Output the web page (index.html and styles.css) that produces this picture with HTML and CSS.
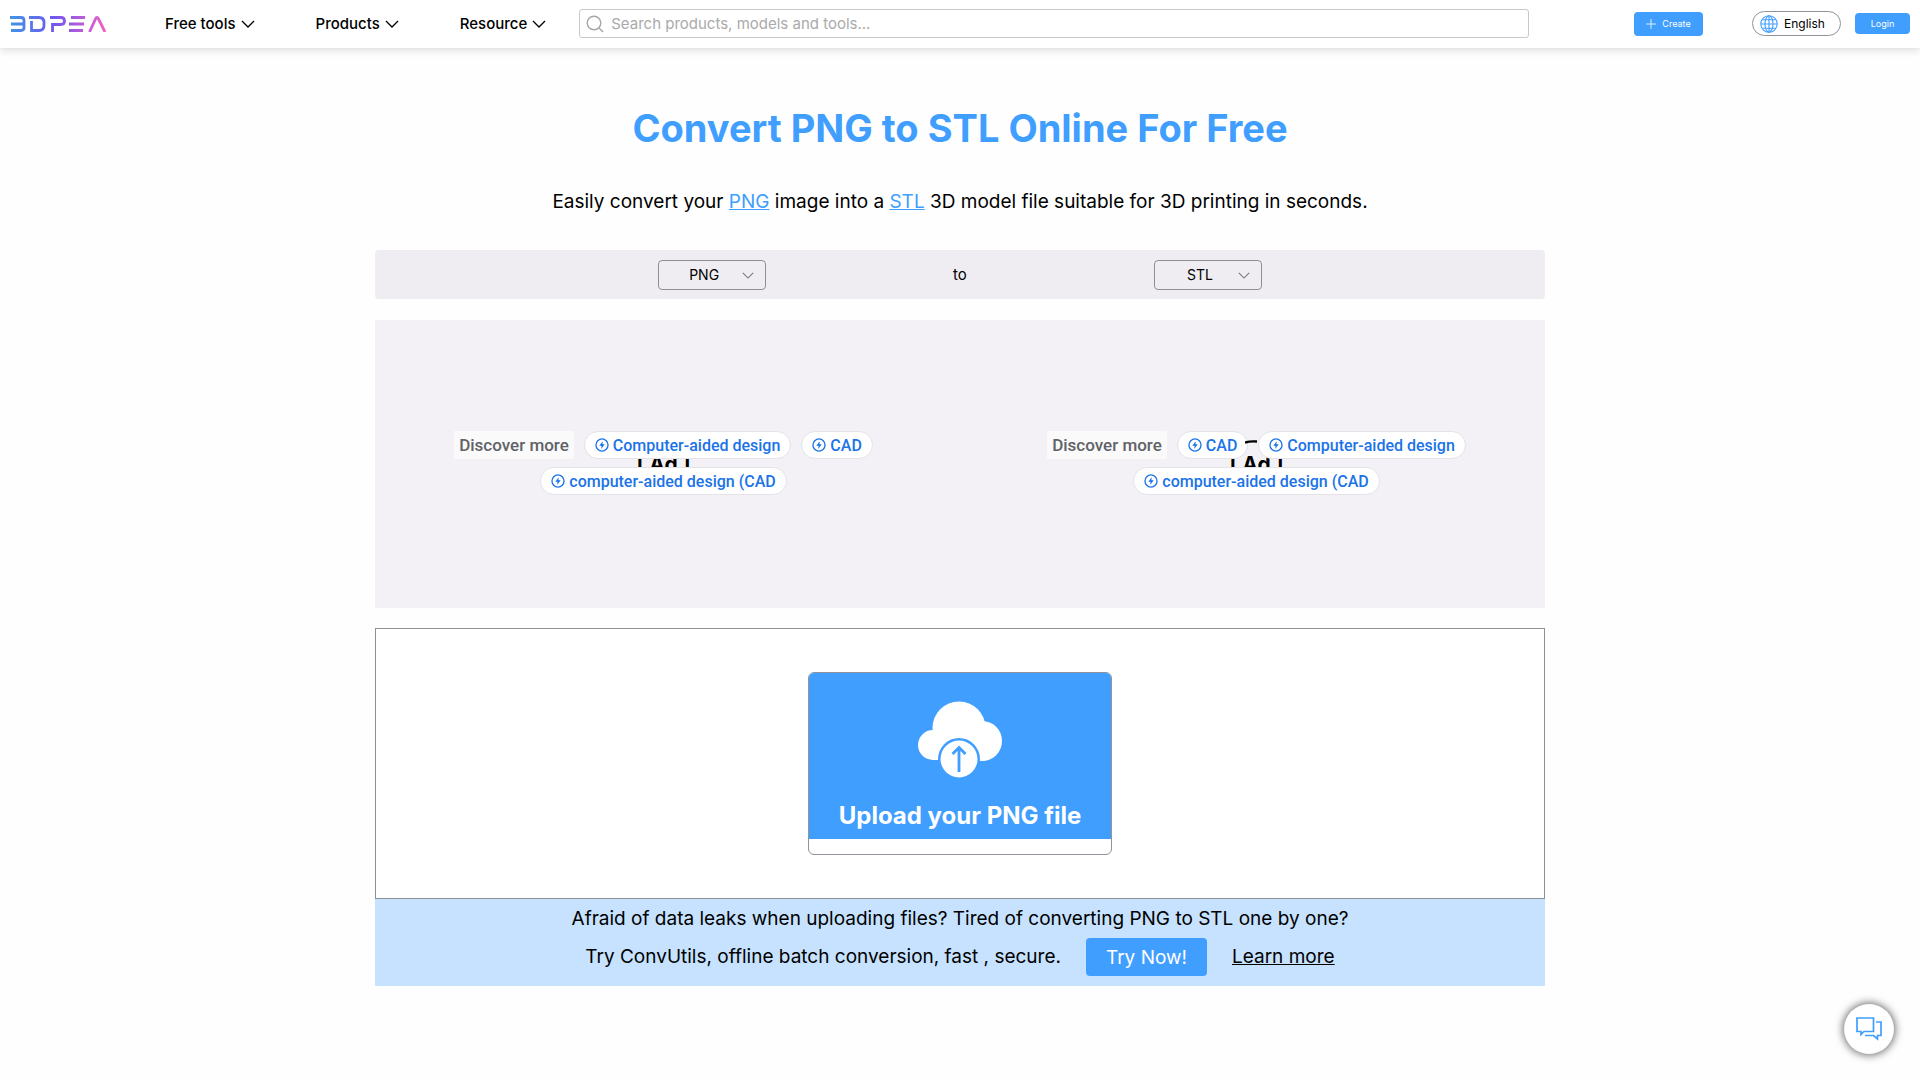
FILE: index.html
```
<!DOCTYPE html>
<html lang="en">
<head>
<meta charset="utf-8">
<title>Convert PNG to STL Online For Free</title>
<meta name="viewport" content="width=device-width, initial-scale=1">
<link rel="stylesheet" href="styles.css">
</head>
<body>
<svg width="0" height="0" class="defs">
	<symbol id="down" viewBox="0 0 14 8"><path d="M1 1l6 6 6-6" fill="none" stroke="currentColor" stroke-width="1.3"/></symbol>
	<symbol id="bolt" viewBox="0 0 16 16"><circle cx="8" cy="8" r="6.9" fill="none" stroke="currentColor" stroke-width="1.5"/><path d="M8.8 3.6L4.9 8.9h2.6l-.4 3.6 4-5.3H8.5z" fill="currentColor"/></symbol>
</svg>

<header class="header">
	<a class="logo" href="#" aria-label="3DPEA">
		<svg width="97" height="16" viewBox="0 0 97 16" fill="none" stroke="url(#lg)" stroke-width="2.8">
			<linearGradient id="lg" gradientUnits="userSpaceOnUse" x1="0" y1="0" x2="97" y2="0">
				<stop offset="0" stop-color="#3f95e8"/><stop offset=".45" stop-color="#7057ee"/><stop offset="1" stop-color="#f35fc8"/>
			</linearGradient>
			<path d="M0 1.5h11q3 0 3 3v7q0 3-3 3H1M1 8h13"/>
			<path d="M19 1.5h10q5 0 5 5v3q0 5-5 5H21.500V5"/>
			<path d="M40 1.500h11q3.500 0 3.500 3.500T51 8.500h-8.500v7.500"/>
			<path d="M61 1.500h14M59 8h15M59 14.500h14"/>
			<path d="M79.500 16l6-13q1.500-3 3 0l6.500 13"/>
		</svg>
	</a>
	<nav class="nav">
		<a href="#">Free tools <svg class="down"><use href="#down"/></svg></a>
		<a href="#">Products <svg class="down"><use href="#down"/></svg></a>
		<a href="#">Resource <svg class="down"><use href="#down"/></svg></a>
	</nav>
	<label class="search">
		<svg width="18" height="18" viewBox="0 0 18 18" fill="none" stroke="#a5a5aa" stroke-width="1.4"><circle cx="8" cy="8" r="6.800"/><path d="M13 13l4 4"/></svg>
		<input type="text" placeholder="Search products, models and tools..." aria-label="Search">
	</label>
	<div class="tools">
		<button class="create"><svg width="10" height="10" viewBox="0 0 10 10" stroke="#fff" stroke-width=".8"><path d="M5 0v10M0 5h10"/></svg>Create</button>
		<button class="lang">
			<svg width="18" height="18" viewBox="0 0 18 18" fill="none" stroke="#409eff" stroke-width="1.100"><circle cx="9" cy="9" r="8.200"/><ellipse cx="9" cy="9" rx="4" ry="8.200"/><path d="M9 1v16M1 9h16M2.500 4.800h13M2.500 13.200h13"/></svg>English
		</button>
		<button class="login">Login</button>
	</div>
</header>

<main class="main">
	<h1 class="title">Convert PNG to STL Online For Free</h1>
	<p class="intro">Easily convert your <a href="#">PNG</a> image into a <a href="#">STL</a> 3D model file suitable for 3D printing in seconds.</p>

	<div class="formats">
		<div class="select">
			<select aria-label="From format"><option>PNG</option></select>
			<svg><use href="#down"/></svg>
		</div>
		<span>to</span>
		<div class="select">
			<select aria-label="To format"><option>STL</option></select>
			<svg><use href="#down"/></svg>
		</div>
	</div>

	<div class="ads">
		<div class="ad">
			<span class="adtext">[ Ad ]</span>
			<div class="chips">
				<span class="discover">Discover more</span>
				<a class="chip" href="#"><svg><use href="#bolt"/></svg>Computer-aided design</a>
				<a class="chip" href="#"><svg><use href="#bolt"/></svg>CAD</a>
			</div>
			<div class="chips">
				<a class="chip" href="#"><svg><use href="#bolt"/></svg>computer-aided design (CAD</a>
			</div>
		</div>
		<div class="ad">
			<span class="adtext">[ Ad ]</span>
			<div class="chips">
				<span class="discover">Discover more</span>
				<a class="chip" href="#"><svg><use href="#bolt"/></svg>CAD</a>
				<a class="chip" href="#"><svg><use href="#bolt"/></svg>Computer-aided design</a>
			</div>
			<div class="chips">
				<a class="chip" href="#"><svg><use href="#bolt"/></svg>computer-aided design (CAD</a>
			</div>
			<svg class="dash" width="12" height="4" viewBox="0 0 12 4"><path d="M0 2.500Q5 1 12 1.500" fill="none" stroke="#000" stroke-width="2.500"/></svg>
		</div>
	</div>

	<div class="upload">
		<div class="card">
			<button class="uploadbtn">
				<svg width="84" height="78" viewBox="0 0 84 78">
					<g fill="#fff"><circle cx="41" cy="27" r="26.500"/><circle cx="15" cy="44" r="15"/><circle cx="64" cy="40" r="20"/><path d="M15 30h50v29H15z"/></g>
					<circle cx="41" cy="58" r="21" fill="#409eff"/>
					<circle cx="41" cy="58" r="18.500" fill="#fff"/>
					<path d="M41 71V47M34.500 53l6.500-6.500 6.500 6.500" fill="none" stroke="#409eff" stroke-width="2.800"/>
				</svg>
				Upload your PNG file
			</button>
		</div>
	</div>

	<div class="banner">
		<p>Afraid of data leaks when uploading files? Tired of converting PNG to STL one by one?</p>
		<div class="try">
			<span>Try ConvUtils, offline batch conversion, fast , secure.</span>
			<button class="trybtn">Try Now!</button>
			<a href="#">Learn more</a>
		</div>
	</div>
</main>

<button class="chat" aria-label="Chat">
	<svg width="26" height="24" viewBox="0 0 26 24" fill="none" stroke="#409eff" stroke-width="1.700"><path d="M1 1h16.500v13.500H8l-3 3v-3H1z"/><path d="M20 5h5v13.500h-3.500V22l-4-3.500H9"/></svg>
</button>
</body>
</html>
```

FILE: styles.css
```
* {
	box-sizing: border-box;
}
body {
	margin: 0;
	min-height: 100vh;
	background-color: #fefefe;
	color: #000;
	font-family: Inter, "Liberation Sans", sans-serif;
}
button {
	font-family: inherit;
	border: none;
	padding: 0;
	cursor: pointer;
}
.defs {
	position: absolute;
}
.header {
	display: flex;
	align-items: center;
	height: 48px;
	padding: 0 10px 1px;
	background-color: #fff;
	box-shadow: 0 2px 8px rgba(0, 0, 0, 0.15);
}
.logo {
	display: flex;
	margin-right: 58px;
}
.nav {
	display: flex;
	gap: 61px;
	margin-right: 33px;
	font-size: 15px;
	font-weight: 500;
}
.nav a {
	display: flex;
	align-items: center;
	gap: 5px;
	color: #000;
	text-decoration: none;
}
.down {
	width: 14px;
	height: 8px;
}
.search {
	flex: 1;
	display: flex;
	align-items: center;
	gap: 7px;
	height: 29px;
	padding-left: 6px;
	border: 1px solid #c8c8cc;
	border-radius: 3px;
}
.search input {
	flex: 1;
	border: none;
	outline: none;
	padding: 0;
	background: none;
	font-family: inherit;
	font-size: 15px;
}
.search input::placeholder {
	color: #aaa;
}
.tools {
	display: flex;
	align-items: center;
	margin-left: 105px;
}
.create {
	display: flex;
	align-items: center;
	justify-content: center;
	gap: 6px;
	width: 69px;
	height: 24px;
	margin-right: 49px;
	border-radius: 4px;
	background-color: #409eff;
	color: #fff;
	font-size: 9px;
}
.lang {
	display: flex;
	align-items: center;
	gap: 6px;
	width: 89px;
	height: 25px;
	margin-right: 14px;
	padding-left: 7px;
	border: 1px solid #909399;
	border-radius: 13px;
	background-color: #fff;
	color: #000;
	font-size: 12px;
}
.login {
	width: 55px;
	height: 21px;
	border-radius: 4px;
	background-color: #409eff;
	color: #fff;
	font-size: 9px;
}

.main {
	max-width: 1170px;
	margin: 0 auto;
}
.title {
	margin: 0;
	padding-top: 56px;
	font-size: 38px;
	line-height: 48px;
	color: #409eff;
	text-align: center;
}
.intro {
	margin: 38px 0 36px;
	font-size: 19px;
	line-height: 24px;
	text-align: center;
}
.intro a {
	color: #409eff;
}
.formats {
	display: flex;
	align-items: center;
	justify-content: center;
	gap: 187px;
	height: 49px;
	border-radius: 4px;
	background-color: #efedf1;
	font-size: 15px;
}
.select {
	position: relative;
}
.select select {
	display: block;
	width: 108px;
	height: 30px;
	padding: 0 16px 0 0;
	border: 1px solid #909094;
	border-radius: 4px;
	appearance: none;
	background: none;
	color: #000;
	font-family: inherit;
	font-size: 14px;
	text-align: center;
	text-align-last: center;
}
.select svg {
	position: absolute;
	right: 12px;
	top: 12px;
	width: 12px;
	height: 7px;
	color: #777;
	pointer-events: none;
}

.ads {
	display: flex;
	gap: 16px;
	height: 288px;
	margin: 21px 0 20px;
	background-color: #f3f1f6;
}
.ad {
	position: relative;
	flex: 1;
	display: flex;
	flex-direction: column;
	justify-content: center;
	align-items: center;
	gap: 8px;
	padding-bottom: 2px;
	font-family: Roboto, sans-serif;
}
.adtext {
	position: absolute;
	top: 50%;
	left: 50%;
	transform: translate(-50%, -50%);
	font-family: Inter, sans-serif;
	font-size: 21px;
	font-weight: 700;
}
.dash {
	position: absolute;
	top: 120px;
	left: 48%;
}
.chips {
	position: relative;
	display: flex;
	gap: 10px;
}
.discover {
	padding: 0 5px;
	background-color: #fafafa;
	color: #5f6368;
	font-size: 17px;
	font-weight: 500;
	line-height: 28px;
}
.chip {
	display: flex;
	align-items: center;
	gap: 4px;
	height: 28px;
	padding: 0 10px;
	border: 1px solid #e3e3e8;
	border-radius: 14px;
	background-color: #fff;
	color: #1a73e8;
	font-size: 16px;
	font-weight: 500;
	text-decoration: none;
}
.chip svg {
	width: 14px;
	height: 14px;
}

.upload {
	display: flex;
	justify-content: center;
	padding: 43px 0;
	border: 1px solid #909090;
	background-color: #fff;
}
.card {
	width: 304px;
	padding-bottom: 15px;
	border: 1px solid #909399;
	border-radius: 6px;
	overflow: hidden;
}
.uploadbtn {
	display: flex;
	flex-direction: column;
	align-items: center;
	gap: 22px;
	width: 100%;
	height: 166px;
	padding-top: 28px;
	background-color: #409eff;
	color: #fff;
	font-size: 24px;
	font-weight: 700;
	line-height: 30px;
}

.banner {
	display: flex;
	flex-direction: column;
	align-items: center;
	gap: 7px;
	padding: 8px 0 10px;
	background-color: #c6e2ff;
	font-size: 19px;
	line-height: 24px;
}
.banner p {
	margin: 0;
}
.try {
	display: flex;
	align-items: center;
	gap: 25px;
}
.try a {
	color: #000;
}
.trybtn {
	width: 121px;
	height: 38px;
	border-radius: 4px;
	background-color: #409eff;
	color: #fff;
	font-size: 19px;
}

.chat {
	position: fixed;
	right: 26px;
	bottom: 26px;
	display: flex;
	align-items: center;
	justify-content: center;
	width: 50px;
	height: 50px;
	border-radius: 50%;
	background-color: #fff;
	box-shadow: 0 0 8px 1px rgba(0, 0, 0, 0.6);
}
```
